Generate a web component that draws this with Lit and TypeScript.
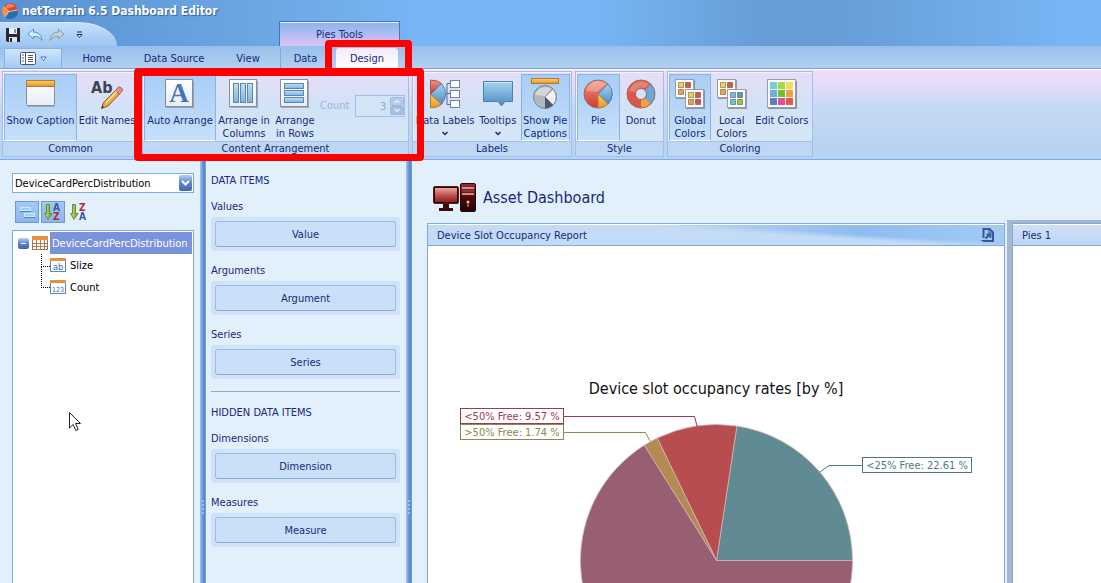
import { LitElement, html, css, svg, nothing, TemplateResult } from "lit";
import { customElement, state } from "lit/decorators.js";
import { classMap } from "lit/directives/class-map.js";

type Icon = () => TemplateResult;

const gradients = html`
  <svg class="defs" width="0" height="0" aria-hidden="true">
    <defs>
      <linearGradient id="red" x1="0" y1="0" x2="0" y2="1"><stop offset="0" stop-color="#f0978a" /><stop offset="1" stop-color="#c9392c" /></linearGradient>
      <linearGradient id="blue" x1="0" y1="0" x2="0" y2="1"><stop offset="0" stop-color="#a6d4f0" /><stop offset="1" stop-color="#4a8cc4" /></linearGradient>
      <linearGradient id="soft" x1="0" y1="0" x2="0" y2="1"><stop offset="0" stop-color="#c2e2f6" /><stop offset="1" stop-color="#7db2dc" /></linearGradient>
      <linearGradient id="gold" x1="0" y1="0" x2="0" y2="1"><stop offset="0" stop-color="#ffd067" /><stop offset="1" stop-color="#e2952a" /></linearGradient>
      <linearGradient id="paper" x1="0" y1="0" x2="0" y2="1"><stop offset="0" stop-color="#ffffff" /><stop offset="1" stop-color="#e4edf6" /></linearGradient>
      <linearGradient id="green" x1="0" y1="0" x2="1" y2="0"><stop offset="0" stop-color="#d6ec78" /><stop offset="1" stop-color="#5f9c1e" /></linearGradient>
      <linearGradient id="knob" x1="0" y1="0" x2="0" y2="1"><stop offset="0" stop-color="#b4d0f2" /><stop offset="0.5" stop-color="#5b86cb" /><stop offset="1" stop-color="#3c66b2" /></linearGradient>
      <linearGradient id="screen" x1="0" y1="0" x2="0" y2="1"><stop offset="0" stop-color="#e8aaa6" /><stop offset="0.5" stop-color="#c45252" /><stop offset="1" stop-color="#8e2020" /></linearGradient>
      <linearGradient id="tower" x1="0" y1="0" x2="0" y2="1"><stop offset="0" stop-color="#8a3030" /><stop offset="0.5" stop-color="#4a0c0c" /><stop offset="1" stop-color="#1c0202" /></linearGradient>
    </defs>
  </svg>
`;

const big = (body: TemplateResult): TemplateResult =>
  html`<svg class="icon" width="32" height="32" viewBox="0 0 32 32" aria-hidden="true">${body}</svg>`;

const captionIcon: Icon = () => big(svg`
  <rect x="2" y="3" width="28" height="26" rx="1" fill="#7d7f86" opacity=".5"/>
  <rect x="1.5" y="2.5" width="28" height="25" rx="1" fill="url(#paper)" stroke="#8b8d94"/>
  <rect x="1.5" y="2.5" width="28" height="6" fill="url(#gold)" stroke="#b67a2c"/>`);

const editNamesIcon: Icon = () => big(svg`
  <text x="0" y="15" font-size="16" font-weight="bold" fill="#3c4454">Ab</text>
  <path d="M24.500 12.500l4 3.500L17 28l-6.500 2.500 2-6z" fill="#f5a843" stroke="#8a5a28"/>
  <path d="M24.500 12.500l2.500-3q1.500-1.500 3.500 0.500t.500 3l-2.500 3z" fill="#ea9086" stroke="#a85c50"/>
  <path d="M15 25L25.500 13.500" stroke="#ffe1a0" stroke-width="1.500"/>
  <path d="M10.500 30.500l.800-3 2 1.500z" fill="#333"/>`);

const frame = svg`
  <rect x="2" y="3" width="28" height="27" fill="#6d7078" opacity=".5"/>
  <rect x="1.500" y="1.500" width="27" height="27" fill="url(#paper)" stroke="#8b8d94"/>`;

const autoIcon: Icon = () => big(svg`${frame}
  <text class="serif" x="15" y="24" font-size="27" font-weight="bold" text-anchor="middle" fill="#4676b8">A</text>`);

const columnsIcon: Icon = () => big(svg`${frame}
  ${[5.5, 12.5, 19.5].map((x) => svg`<rect x=${x} y="5.500" width="5" height="19" fill="url(#soft)" stroke="#5b87ae"/>`)}`);

const rowsIcon: Icon = () => big(svg`${frame}
  ${[5.5, 12.5, 19.5].map((y) => svg`<rect x="5.500" y=${y} width="19" height="5" fill="url(#soft)" stroke="#5b87ae"/>`)}`);

const dataLabelsIcon: Icon = () => big(svg`
  <path d="M1.500 16V2Q9 2 13 6z" fill="url(#red)" stroke="#b55046"/>
  <path d="M2 16L12.500 5.500Q21 15 12.500 26.500z" fill="url(#blue)" stroke="#4d82b0"/>
  <path d="M1.500 16l11 10.500Q8 30 1.500 30z" fill="url(#gold)" stroke="#bd7c2e"/>
  <path d="M17 15.500h4M21 5.500h-3v21h3" fill="none" stroke="#5b6a8c"/>
  ${[2.5, 12.5, 22.5].map((y) => svg`<rect x="21.500" y=${y} width="9" height="7" fill="#fff" stroke="#7583a3"/>`)}`);

const tooltipIcon: Icon = () => big(svg`
  <path d="M1.500 3.500h29v20H23l-3.500 4.500-3.500-4.500H1.500z" fill="url(#blue)" stroke="#4d82b0"/>
  <path d="M2.500 4.500h27" stroke="#d5ecf9"/>`);

const pieCaptionIcon: Icon = () => big(svg`
  <rect x="2.500" y=".500" width="27" height="5" fill="url(#gold)" stroke="#b67a2c"/>
  <circle cx="16" cy="19" r="11.500" fill="#b2b8c2" stroke="#7c828e"/>
  <path d="M16 19l8-8A11.500 11.500 0 0 1 24 27z" fill="#eef2f6" stroke="#8a909b"/>
  <path d="M16 19l8 8A11.500 11.500 0 0 1 16 30.500z" fill="#4f5868"/>
  <path d="M6 17a10.500 10.500 0 0 1 16-6L16 18z" fill="#fff" opacity=".450"/>`);

const pieIcon: Icon = () => big(svg`
  <circle cx="16" cy="16" r="14" fill="url(#red)" stroke="#a8665e"/>
  <path d="M16 16l10-10A14 14 0 0 1 26 26z" fill="url(#blue)" stroke="#4d82b0"/>
  <path d="M16 16l10 10A14 14 0 0 1 16 30z" fill="url(#gold)" stroke="#bd7c2e"/>
  <path d="M4 13A12.500 12.500 0 0 1 24 6L15 14z" fill="#fff" opacity=".250"/>`);

const donutIcon: Icon = () => big(svg`
  <circle cx="16" cy="16" r="9.750" fill="none" stroke="#d9574a" stroke-width="8.500"/>
  <path d="M22.900 9.100A9.750 9.750 0 0 1 22.900 22.900" fill="none" stroke="#6ba9d8" stroke-width="8.500"/>
  <path d="M22.900 22.900A9.750 9.750 0 0 1 16 25.750" fill="none" stroke="#efa43b" stroke-width="8.500"/>
  <circle cx="16" cy="16" r="14" fill="none" stroke="#a8665e"/>
  <circle cx="16" cy="16" r="5.500" fill="none" stroke="#a8665e"/>
  <path d="M4 13A12.500 12.500 0 0 1 24 6L20 10Q12 8 10 14z" fill="#fff" opacity=".250"/>`);

const swatch = (x: number, y: number, colors: string[]) => svg`
  <rect x=${x + 1} y=${y + 1} width="19" height="19" fill="#666a74" opacity=".600"/>
  <rect x=${x + 0.5} y=${y + 0.5} width="18" height="18" fill="#fff" stroke="#9a9da5"/>
  ${colors.map((c, i) => svg`<rect x=${x + 3.5 + (i % 2) * 7} y=${y + 3.5 + Math.floor(i / 2) * 7} width="5" height="5" fill=${c} stroke="#00000055"/>`)}`;

const globalIcon: Icon = () => big(svg`
  ${swatch(1, 1, ["#f3d14b", "#e0573f", "#f0a040", "#e8b040"])}
  ${swatch(11, 11, ["#f3d14b", "#e0573f", "#f0a040", "#d94a62"])}`);

const localIcon: Icon = () => big(svg`
  ${swatch(1, 1, ["#f3d14b", "#e0573f", "#f0a040", "#e8b040"])}
  ${swatch(11, 11, ["#7fb4e6", "#5b95d8", "#62c9d6", "#8ccc3c"])}`);

const paletteIcon: Icon = () => big(svg`
  <rect x="2" y="3" width="29" height="28" fill="#555a66" opacity=".600"/>
  <rect x="1.500" y="1.500" width="28" height="28" fill="#fff" stroke="#9a9da5"/>
  ${["#6cd3d3", "#a4d84a", "#f2de4e", "#6aaede", "#72c02c", "#f2a044", "#5b7fc6", "#dd4f9c", "#e4574c"].map(
    (c, i) => svg`<rect x=${4 + (i % 3) * 8} y=${4 + Math.floor(i / 3) * 8} width="7" height="7" fill=${c}/>`)}`);

const sortGlyph = (top: string, bottom: string, topColor: string, bottomColor: string) => html`
  <svg width="18" height="18" viewBox="0 0 18 18" aria-hidden="true">
    <path d="M2.500 1.500h3v9h2.500L4 16.500 0.500 10.500h2z" fill="url(#green)" stroke="#4f7f1c" stroke-width=".800"/>
    <text x="9" y="8" font-size="10" font-weight="bold" fill=${topColor}>${top}</text>
    <text x="9" y="17" font-size="10" font-weight="bold" fill=${bottomColor}>${bottom}</text>
  </svg>`;

const fieldIcon = (label: string) => html`
  <svg width="16" height="16" viewBox="0 0 16 16" aria-hidden="true">
    <rect x=".500" y="1.500" width="15" height="13" fill="#fff" stroke="#5a87c4"/>
    <rect x="0" y="1" width="16" height="3" fill="#e8913a"/>
    <text x="8" y="13" font-size=${label.length > 2 ? 7 : 9} text-anchor="middle" fill="#2f6fb5">${label}</text>
  </svg>`;

interface RibbonItem { label: string[]; icon: Icon; on?: boolean; menu?: boolean; size: string; }
interface RibbonGroup { name: string; size: string; items: RibbonItem[]; counter?: boolean; }

const groups: RibbonGroup[] = [
  { name: "Common", size: "g-common", items: [
    { label: ["Show Caption"], icon: captionIcon, on: true, size: "xl" },
    { label: ["Edit Names"], icon: editNamesIcon, size: "l" } ] },
  { name: "Content Arrangement", size: "g-content", counter: true, items: [
    { label: ["Auto Arrange"], icon: autoIcon, on: true, size: "xl" },
    { label: ["Arrange in", "Columns"], icon: columnsIcon, size: "l" },
    { label: ["Arrange", "in Rows"], icon: rowsIcon, size: "s" } ] },
  { name: "Labels", size: "g-labels", items: [
    { label: ["Data Labels"], icon: dataLabelsIcon, menu: true, size: "l" },
    { label: ["Tooltips"], icon: tooltipIcon, menu: true, size: "s" },
    { label: ["Show Pie", "Captions"], icon: pieCaptionIcon, on: true, size: "m" } ] },
  { name: "Style", size: "g-style", items: [
    { label: ["Pie"], icon: pieIcon, on: true, size: "s" },
    { label: ["Donut"], icon: donutIcon, size: "s" } ] },
  { name: "Coloring", size: "g-coloring", items: [
    { label: ["Global", "Colors"], icon: globalIcon, on: true, size: "s" },
    { label: ["Local", "Colors"], icon: localIcon, size: "s" },
    { label: ["Edit Colors"], icon: paletteIcon, size: "l" } ] },
];

interface Slice { share: number; color: string; }
const slices: Slice[] = [
  { share: 22.61, color: "#608b92" },
  { share: 9.57, color: "#b84d50" },
  { share: 1.74, color: "#b58a50" },
  { share: 66.08, color: "#975f71" },
];

@customElement("app-root")
export class AppRoot extends LitElement {
  @state() private sort = "asc";

  static styles = css`
    :host {
      display: flex;
      flex-direction: column;
      height: 100vh;
      overflow: hidden;
      position: relative;
      background: #e2f0fc;
      color: #15297c;
      font: 11px/14px "DejaVu Sans Condensed", "DejaVu Sans", sans-serif;
      font-stretch: condensed;
    }
    * { box-sizing: border-box; }
    button, input, select { font: inherit; color: inherit; margin: 0; padding: 0; }
    button { background: none; border: 0; }
    svg { display: block; flex: none; }
    .defs { position: absolute; }
    .serif { font-family: "Liberation Serif", serif; }

    .top { position: relative; flex: none; height: 46px;
      background: linear-gradient(90deg, #5a91d0 0, #6fabe8 28%, #77b5f4 38%, #77b5f4 54%, #679cd6 70%, #679cd6 75%, #77b5f4 97%); }
    .title { display: flex; align-items: center; gap: 4px; height: 22px; padding-left: 2px; margin: 0;
      font-size: 12px; font-weight: bold; color: #fff; text-shadow: 1px 1px 1px #2f5fa0; }
    .qat { display: flex; align-items: center; gap: 6px; width: 117px; height: 24px; padding-left: 5px;
      background: linear-gradient(#c4dffb, #9cc6f2); border-top: 1px solid #d8ebfd; border-radius: 0 40px 0 0 / 0 24px 0 0; }
    .qat button { display: flex; }
    .context { position: absolute; left: 279px; bottom: 0; width: 121px; height: 25px; text-align: center; line-height: 26px;
      border: 1px solid #4576b8; border-bottom: 0; background: linear-gradient(#88b4ee, #dcc4f6); box-shadow: inset 0 1px #e6effc; }

    .tabs { display: flex; flex: none; height: 23px; padding: 2px 0 0 4px; background: linear-gradient(#98bfec, #b2d0f1); border-bottom: 1px solid #7ba2d8; }
    .tab { display: flex; align-items: center; justify-content: center; height: 20px; padding-top: 2px; }
    .app { width: 58px; gap: 4px; padding: 0; border: 1px solid #8ab0e4; border-bottom: 0; border-radius: 2px 2px 0 0; background: linear-gradient(#cfe6fb, #a2caf4); }
    .home { width: 70px; }
    .source { width: 84px; }
    .view { width: 64px; }
    .data { width: 50px; border-left: 1px solid #7fa8dd; }
    .design { width: 62px; margin-left: 6px; background: linear-gradient(#f2e9fb, #ffffff); border-radius: 3px 3px 0 0; }

    .ribbon { display: flex; flex: none; gap: 3px; height: 91px; padding: 1px 2px 2px;
      border-top: 1px solid #fff; border-bottom: 1px solid #86aade;
      background: linear-gradient(#f1dcfb 0, #eadcfa 14%, #c6d9f4 40%, #b8d3f1 90%, #b4d4f8); }
    .group { display: flex; flex-direction: column; border: 1px solid #a5bde8; box-shadow: inset 1px 1px #ffffff99;
      background: linear-gradient(#e6def8, #d2e2f6 40%, #d8e9fa); min-width: 0; }
    .g-common { width: 137px; } .g-content { width: 267px; } .g-labels { width: 160px; }
    .g-style { width: 89px; } .g-coloring { width: 146px; }
    .items { display: flex; flex: 1; padding: 2px 1px 0; }
    .group h2 { margin: 0; height: 15px; font: inherit; text-align: center; border-top: 1px solid #a6c2ea; background: #bdd7f4; }
    .item { display: flex; flex-direction: column; align-items: center; height: 67px; padding-top: 3px; line-height: 13px; white-space: nowrap;
      border: 1px solid transparent; justify-content: flex-start; }
    .item .text { display: block; margin-top: 4px; }
    .item.on { background: linear-gradient(#a9cdf6, #b9d8f9 60%, #c6e0fb); border-color: #8db2e6; border-bottom-color: #fff; }
    .xl { width: 73px; } .l { width: 60px; } .m { width: 50px; } .s { width: 46px; }
    .g-labels .items { padding-left: 2px; }
    .g-style .s, .g-coloring .s { width: 43px; }
    .g-content .l { width: 56px; }
    .g-content .xl { width: 72px; }
    .icon { overflow: visible; }
    .chev { margin-top: 4px; }
    .counter { display: flex; align-items: center; gap: 6px; margin: 21px 0 0 2px; height: 22px; color: #9db4d6; }
    .spin { position: relative; }
    .spin input { display: block; width: 50px; height: 22px; padding-right: 18px; text-align: right; border: 1px solid #a3bfe8;
      background: #d3e4f7; color: #8fa8cf; appearance: textfield; -moz-appearance: textfield; }
    .spin input::-webkit-inner-spin-button { appearance: none; -webkit-appearance: none; }
    .spin svg { position: absolute; right: 1px; top: 2px; }

    .work { display: flex; flex: 1; min-height: 0; }
    .fields { display: flex; flex-direction: column; width: 200px; padding: 13px 6px 0 12px; }
    .combo { position: relative; }
    .combo select { display: block; width: 100%; height: 20px; padding: 1px 0 0 2px; appearance: none; border: 1px solid #84a9dd; border-radius: 0; background: #fff; color: #000; }
    .combo svg { position: absolute; right: 2px; top: 2px; pointer-events: none; }
    .tools { display: flex; gap: 2px; margin: 8px 0 7px 3px; }
    .tools button { display: flex; align-items: center; justify-content: center; width: 24px; height: 22px; border: 1px solid transparent; }
    .tools .on { background: linear-gradient(#a4c8f4, #8bb6ee); border-color: #6f98d6; }
    .tree { flex: 1; margin: 0; padding: 1px; list-style: none; border: 1px solid #84a9dd; border-bottom: 0; background: #fff; color: #000; }
    .tree ul { margin: 0; padding: 0; list-style: none; }
    .node { display: flex; align-items: center; height: 22px; line-height: 22px; }
    .name { padding-top: 1px; }
    .root { padding-left: 4px; gap: 3px; }
    .root .name { flex: 1; height: 22px; margin-left: -1px; padding-left: 2px; background: #7a93dd; color: #fff; white-space: nowrap; }
    .leaf { gap: 4px; }
    .leaf::before { content: ""; align-self: flex-start; width: 8px; height: 12px; margin: 0 -4px 0 27px; border: 1px dotted #000; border-width: 0 0 1px 1px; }
    .leaf + .leaf::before { align-self: stretch; height: auto; margin-bottom: 10px; margin-top: -10px; }

    .split { display: flex; align-items: flex-end; justify-content: center; width: 6px; padding-bottom: 66px; background: linear-gradient(90deg, #a5c5ef, #6f9bdb 40%, #5682c8 70%, #7fa6de); }

    .items-pane { width: 200px; padding: 12px 6px 0 5px; }
    .items-pane h3, .items-pane h4 { margin: 0; font: inherit; line-height: 18px; }
    .items-pane h3 { margin-bottom: 8px; }
    .slot { display: block; width: 100%; height: 34px; margin: 1px 0 11px; padding: 4px; border-radius: 3px; background: #cfe2f7; }
    .slot span { display: block; height: 26px; line-height: 26px; border: 1px solid #9ebbe4; border-bottom-color: #86a8da; border-radius: 3px; background: #cbe0f8; }
    .rule { margin: 12px 0; border: 0; border-top: 1px solid #8fa9cc; }

    .board { display: flex; flex-direction: column; flex: 1; min-width: 0; padding-left: 15px; }
    .board header { display: flex; align-items: center; gap: 5px; height: 60px; padding: 16px 0 0 5px; }
    .board h1 { margin: 0; font-size: 16px; font-weight: normal; line-height: 20px; }
    .cards { display: grid; grid-template-columns: minmax(0, 1fr) 94px; gap: 2px; flex: 1; min-height: 0; }
    .card { display: flex; flex-direction: column; min-width: 0; min-height: 0; margin-top: 3px; border: 1px solid #84a9dd; border-bottom: 0; background: #fff; }
    .bar { display: flex; align-items: center; justify-content: space-between; flex: none; height: 22px; padding: 0 9px;
      border-bottom: 1px solid #84a9dd; box-shadow: inset 0 1px #fff; background: linear-gradient(#cfe1f7, #bed6f3); }
    .wide { background: linear-gradient(183.500deg, #c4dbf500 34%, #c4dbf5 44%), linear-gradient(90deg, #d4e4f8, #c4dbf6 35%, #8dbcf0 75%, #a4cbf4); }
    .bar h2 { margin: 0; padding-top: 2px; font: inherit; }
    .picked { display: flex; padding: 3px 0 0 5px; background: #a6b8cd; }
    .picked .card { flex: 1; margin: 0; border-right: 0; }
    .chart { align-self: center; overflow: hidden; }
    .chart .heading { font-size: 16px; fill: #111; }

    .mark { position: absolute; border: 7px solid #fe0000; border-radius: 4px; pointer-events: none; }
    .mark-group { left: 134px; top: 68px; width: 290px; height: 93px; border-width: 8px 7px 7px 8px; }
    .mark-tab { left: 325px; top: 40px; width: 87px; height: 36px; }
    .pointer { position: absolute; left: 68px; top: 411px; }
  `;

  private renderItem(item: RibbonItem) {
    return html`<button class=${classMap({ item: true, on: !!item.on, [item.size]: true })} aria-pressed=${item.on ? "true" : "false"}>
      ${item.icon()}
      <span class="text">${item.label[0]}${item.label[1] ? html`<br />${item.label[1]}` : nothing}</span>
      ${item.menu ? html`<svg class="chev" width="6" height="5" viewBox="0 0 6 5" aria-hidden="true"><path d="M.5 1L3 3.500 5.500 1" fill="none" stroke="#15297c" stroke-width="1.500"/></svg>` : nothing}
    </button>`;
  }

  private renderGroup(group: RibbonGroup) {
    return html`<section class=${"group " + group.size}>
      <div class="items">
        ${group.items.map((i) => this.renderItem(i))}
        ${group.counter ? html`<div class="counter">
          <label for="count">Count</label>
          <span class="spin">
            <input id="count" type="number" value="3" disabled />
            <svg width="14" height="18" viewBox="0 0 14 18" aria-hidden="true">
              <rect x=".5" y=".5" width="13" height="8" rx="1" fill="#b4cbec" stroke="#9db8e0"/>
              <rect x=".5" y="9.500" width="13" height="8" rx="1" fill="#a4bfe6" stroke="#9db8e0"/>
              <path d="M4.500 6L7 3.500 9.500 6M4.500 12L7 14.500 9.500 12" fill="none" stroke="#e4eefa" stroke-width="1.500"/>
            </svg>
          </span>
        </div>` : nothing}
      </div>
      <h2>${group.name}</h2>
    </section>`;
  }

  private renderSlot(label: string, text: string) {
    return html`<h4>${label}</h4><button class="slot"><span>${text}</span></button>`;
  }

  private renderPie() {
    const cx = 288.5, cy = 314.5, r = 136;
    let total = 0;
    const at = (share: number) => {
      const a = (share / 100) * Math.PI * 2;
      return (cx + r * Math.cos(a)).toFixed(2) + " " + (cy - r * Math.sin(a)).toFixed(2);
    };
    return slices.map((s) => {
      const from = at(total);
      total += s.share;
      return svg`<path d=${`M${cx} ${cy}L${from}A${r} ${r} 0 ${s.share > 50 ? 1 : 0} 0 ${at(total)}Z`} fill=${s.color} stroke="#cdb4b8" stroke-width=".8"/>`;
    });
  }

  render() {
    return html`
      ${gradients}
      <div class="top">
        <h1 class="title">
          <svg width="16" height="18" viewBox="0 0 16 18" aria-hidden="true">
            <circle cx="8" cy="9" r="7.800" fill="#e2402a"/>
            <path d="M7 9.500L15.800 8A7.800 7.800 0 0 1 3 15z" fill="#1f6fb4"/>
            <path d="M7 9.500L3 15A7.800 7.800 0 0 1 1.500 4.500z" fill="#f4953a"/>
            <path d="M3 4.500Q8-1 13 4.500 8 5 5.500 7z" fill="#f79a84" opacity=".7"/>
            <path d="M1.500 4.500L7 9.500 15.800 8M7 9.500L3 15" fill="none" stroke="#f5dfd6" stroke-width=".8"/>
          </svg>
          netTerrain 6.5 Dashboard Editor
        </h1>
        <div class="qat">
          <button aria-label="Save"><svg width="16" height="16" viewBox="0 0 16 16"><path d="M1 1h14v14H2.500L1 13.500z" fill="#252a38"/><rect x="4" y="1" width="8" height="6" fill="#eef2f8"/><rect x="4" y="10" width="8" height="5" fill="#dfe5ee"/><rect x="5" y="11" width="2" height="4" fill="#252a38"/><rect x="9" y="2" width="2" height="4" fill="#8793a8"/></svg></button>
          <button aria-label="Undo"><svg width="16" height="16" viewBox="0 0 16 16"><path d="M1 7l5.500-5v3Q14 5 15 13.500 12 9 6.500 9.500V12z" fill="#d5ecfb" stroke="#4e93cd"/></svg></button>
          <button aria-label="Redo"><svg width="16" height="16" viewBox="0 0 16 16"><path d="M15 7L9.500 2v3Q2 5 1 13.500 4 9 9.500 9.500V12z" fill="#c6ced8" stroke="#8c9bae"/></svg></button>
          <button aria-label="Customize"><svg width="16" height="12" viewBox="0 0 16 12"><path d="M6 3h5M6 5.500L8.500 8.500 11 5.500z" fill="#fff" stroke="#15297c"/></svg></button>
        </div>
        <div class="context">Pies Tools</div>
      </div>

      <nav class="tabs">
        <button class="tab app" aria-label="Application menu">
          <svg width="16" height="13" viewBox="0 0 16 13"><rect x=".5" y=".5" width="15" height="12" rx="1" fill="#fff" stroke="#4c5566"/><path d="M5.500 1v11" stroke="#4c5566"/><path d="M2 3h2M2 6h2M2 9h2M8 3.500h5M8 5.500h5M8 7.500h5M8 9.500h5" stroke="#4c5566"/></svg>
          <svg width="7" height="6" viewBox="0 0 7 6"><path d="M.8 1h5.400L3.500 4.500z" fill="#fff" stroke="#3f74ba"/></svg>
        </button>
        <button class="tab home">Home</button>
        <button class="tab source">Data Source</button>
        <button class="tab view">View</button>
        <button class="tab data">Data</button>
        <button class="tab design">Design</button>
      </nav>

      <div class="ribbon">${groups.map((g) => this.renderGroup(g))}</div>

      <main class="work">
        <aside class="fields">
          <div class="combo">
            <select aria-label="Data source"><option>DeviceCardPercDistribution</option></select>
            <svg width="13" height="16" viewBox="0 0 13 16" aria-hidden="true"><rect width="13" height="16" rx="2" fill="url(#knob)"/><path d="M3 6l3.500 3.500L10 6" fill="none" stroke="#fff" stroke-width="2"/></svg>
          </div>
          <div class="tools">
            <button class="on" aria-label="Group fields"><svg width="16" height="14" viewBox="0 0 16 14"><rect x="1.500" y="2.500" width="10" height="3" fill="#9fcdf4" stroke="#d3e8fb"/><rect x="5.500" y="8.500" width="10" height="3" fill="#9fcdf4" stroke="#d3e8fb"/><path d="M1 6.500h11M5 12.500h11" stroke="#5584c6"/></svg></button>
            <button class=${classMap({ on: this.sort === "asc" })} aria-label="Sort ascending" @click=${() => (this.sort = "asc")}>${sortGlyph("A", "Z", "#3a55a0", "#b02a3a")}</button>
            <button class=${classMap({ on: this.sort === "desc" })} aria-label="Sort descending" @click=${() => (this.sort = "desc")}>${sortGlyph("Z", "A", "#b02a3a", "#3a55a0")}</button>
          </div>
          <ul class="tree">
            <li>
              <div class="node root">
                <svg width="11" height="11" viewBox="0 0 11 11" aria-hidden="true"><rect width="11" height="11" rx="2" fill="url(#knob)"/><path d="M3 5.500h5" stroke="#fff"/></svg>
                <svg width="16" height="14" viewBox="0 0 16 14" aria-hidden="true"><rect x=".5" y=".5" width="15" height="13" fill="#fff" stroke="#a8734a"/><rect width="16" height="4" fill="#e8913a"/><path d="M1 7.500h14M1 10.500h14M4.500 4v9M8.500 4v9M12.500 4v9" stroke="#b07c60"/></svg>
                <span class="name">DeviceCardPercDistribution</span>
              </div>
              <ul>
                <li class="node leaf">${fieldIcon("ab")}<span class="name">Slize</span></li>
                <li class="node leaf">${fieldIcon("123")}<span class="name">Count</span></li>
              </ul>
            </li>
          </ul>
        </aside>

        ${this.renderSplit()}

        <section class="items-pane">
          <h3>DATA ITEMS</h3>
          ${this.renderSlot("Values", "Value")}
          ${this.renderSlot("Arguments", "Argument")}
          ${this.renderSlot("Series", "Series")}
          <hr class="rule" />
          <h3>HIDDEN DATA ITEMS</h3>
          ${this.renderSlot("Dimensions", "Dimension")}
          ${this.renderSlot("Measures", "Measure")}
        </section>

        ${this.renderSplit()}

        <section class="board">
          <header>
            <svg width="46" height="32" viewBox="0 0 46 32" aria-hidden="true">
              <rect x="1.500" y="4.500" width="25" height="17" rx="1.500" fill="#2a0606" stroke="#5c1a1a"/>
              <rect x="3" y="6" width="22" height="14" fill="url(#screen)"/>
              <path d="M11 22h6v4h4v3H7v-3h4z" fill="#3a0909"/>
              <rect x="28.500" y="1.500" width="15" height="28" rx="1.500" fill="url(#tower)" stroke="#2c0505"/>
              <path d="M30 6h12M30 12h12" stroke="#dd8a84" stroke-width="2"/><path d="M30 9h12" stroke="#b05050"/>
              <circle cx="36" cy="20" r="1.500" fill="#f6b8b2"/><path d="M36 22v3" stroke="#d66" stroke-width="1.500"/>
            </svg>
            <h1>Asset Dashboard</h1>
          </header>
          <div class="cards">
            <article class="card">
              <div class="bar wide">
                <h2>Device Slot Occupancy Report</h2>
                <button aria-label="Export"><svg width="14" height="14" viewBox="0 0 14 14"><path d="M2.500 10V1h6L12 4.500V13H2" fill="none" stroke="#3b549e" stroke-width="2"/><path d="M0 12.500h5M8 1v4h4" fill="none" stroke="#3b549e" stroke-width="1.200"/><path d="M4.500 10.500L9 6.500M5.500 6.500h4V10" fill="none" stroke="#3b549e" stroke-width="1.800"/></svg></button>
              </div>
              <svg class="chart" width="576" height="460" viewBox="0 0 576 460" role="img" aria-label="Device slot occupancy rates">
                <text class="heading" x="288" y="148" text-anchor="middle">Device slot occupancy rates [by %]</text>
                ${this.renderPie()}
                <path d="M136 170.500H266.500L269 180" fill="none" stroke="#9c3a50"/>
                <path d="M136 186.500H217.500L222 195" fill="none" stroke="#93854f"/>
                <path d="M434 219.500H401L392 226" fill="none" stroke="#4f7a82"/>
                <rect x="32.500" y="162.500" width="103" height="15" fill="#fff" stroke="#9c3a50"/>
                <rect x="32.500" y="178.500" width="103" height="15" fill="#fff" stroke="#93854f"/>
                <rect x="434.500" y="211.500" width="109" height="15" fill="#fff" stroke="#4f7a82"/>
                <text x="84" y="174" text-anchor="middle" fill="#9c3a50">&lt;50% Free: 9.57 %</text>
                <text x="84" y="190" text-anchor="middle" fill="#93854f">&gt;50% Free: 1.74 %</text>
                <text x="489" y="223" text-anchor="middle" fill="#4f7a82">&lt;25% Free: 22.61 %</text>
              </svg>
            </article>
            <div class="picked">
              <article class="card"><div class="bar"><h2>Pies 1</h2></div></article>
            </div>
          </div>
        </section>
      </main>

      <div class="mark mark-group"></div>
      <div class="mark mark-tab"></div>
      <svg class="pointer" width="14" height="22" viewBox="0 0 14 22" aria-hidden="true"><path d="M1.500 1.500v15.500l3.700-3.500 2.600 6 2.400-1-2.600-6H12.500z" fill="#fff" stroke="#222"/></svg>
    `;
  }

  private renderSplit() {
    return html`<div class="split"><svg width="4" height="18" viewBox="0 0 4 18" aria-hidden="true">${[1, 5, 9, 13].map((y) => svg`<rect x="1" y=${y} width="2" height="2" fill="#9fbfe9"/>`)}</svg></div>`;
  }
}
